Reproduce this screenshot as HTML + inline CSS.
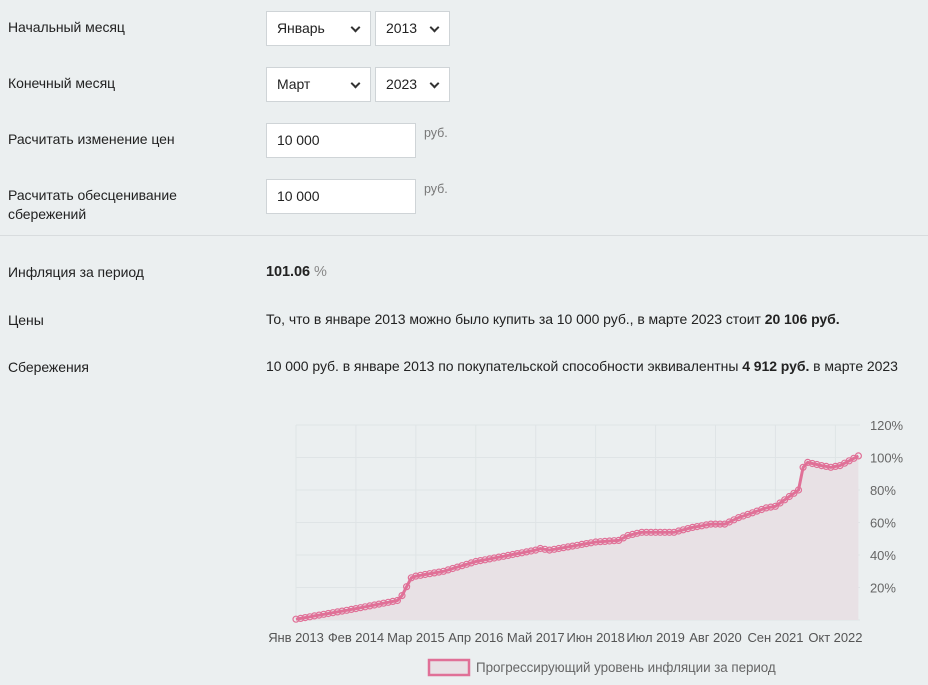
<!DOCTYPE html>
<html><head><meta charset="utf-8"><style>
body{margin:0;width:928px;height:685px;background:#ebeff0;font-family:"Liberation Sans",sans-serif;font-size:14px;color:#222;position:relative;overflow:hidden;letter-spacing:-0.05px}
.a{position:absolute}
.lbl{left:8px;line-height:19px}
.box{background:#fff;border:1px solid #cfd4d7;box-sizing:border-box;height:35px;line-height:33px;padding-left:10px;font-size:14px}
.sel::after{content:"";position:absolute;right:11px;top:12px;width:5px;height:5px;border-right:2px solid #333;border-bottom:2px solid #333;transform:rotate(45deg)}
.rub{color:#777;font-size:12.5px}
b{font-weight:bold}
</style></head><body>
<div class="a lbl" style="top:18px">Начальный месяц</div>
<div class="a box sel" style="left:266px;top:11px;width:105px">Январь</div>
<div class="a box sel" style="left:375px;top:11px;width:75px">2013</div>
<div class="a lbl" style="top:74px">Конечный месяц</div>
<div class="a box sel" style="left:266px;top:67px;width:105px">Март</div>
<div class="a box sel" style="left:375px;top:67px;width:75px">2023</div>
<div class="a lbl" style="top:130px">Расчитать изменение цен</div>
<div class="a box" style="left:266px;top:123px;width:150px">10 000</div>
<div class="a rub" style="left:424px;top:126px">руб.</div>
<div class="a lbl" style="top:186px">Расчитать обесценивание<br>сбережений</div>
<div class="a box" style="left:266px;top:179px;width:150px">10 000</div>
<div class="a rub" style="left:424px;top:182px">руб.</div>
<div class="a" style="left:0;top:235px;width:928px;height:1px;background:#d8dcde"></div>
<div class="a lbl" style="top:263px">Инфляция за период</div>
<div class="a" style="left:266px;top:264px;font-size:14.5px"><b>101.06</b> <span style="color:#888">%</span></div>
<div class="a lbl" style="top:311px">Цены</div>
<div class="a" style="left:266px;top:311px">То, что в январе 2013 можно было купить за 10 000 руб., в марте 2023 стоит <b>20 106 руб.</b></div>
<div class="a lbl" style="top:358px">Сбережения</div>
<div class="a" style="left:266px;top:358px">10 000 руб. в январе 2013 по покупательской способности эквивалентны <b>4 912 руб.</b> в марте 2023</div>
<svg class="a" style="left:0;top:0" width="928" height="685" id="ch"></svg>
<script>
var s='',x0=296,pm=4.61,yb=620,py=1.625;
for(var i=0;i<7;i++){var y=yb-i*20*py;s+='<line x1="296" x2="860" y1="'+y+'" y2="'+y+'" stroke="#dfe4e6"/>';if(i>0)s+='<text x="870" y="'+(y+5)+'" font-size="13" fill="#666" font-family="Liberation Sans">'+(i*20)+'%</text>';}
var L=['Янв 2013','Фев 2014','Мар 2015','Апр 2016','Май 2017','Июн 2018','Июл 2019','Авг 2020','Сен 2021','Окт 2022'];
for(var i=0;i<10;i++){var x=x0+i*13*pm;s+='<line x1="'+x+'" x2="'+x+'" y1="425" y2="620" stroke="#dfe4e6"/><text x="'+x+'" y="642" text-anchor="middle" font-size="13" fill="#555" font-family="Liberation Sans">'+L[i]+'</text>';}
var K=[[0,0.5],[13,7],[22,12],[23,15],[25,26],[26,27],[32,30],[39,36],[52,43],[53,44],[55,43],[65,48],[70,49],[72,52],[75,54],[80,54],[82,54],[86,57],[90,59],[93,59],[96,63],[102,69],[104,70],[107,76],[109,80],[110,94],[111,97],[114,95],[116,94],[118,95],[122,101]];
var v=[];for(var m=0;m<=122;m++){for(var k=0;k<K.length-1;k++)if(m>=K[k][0]&&m<=K[k+1][0]){var t=(m-K[k][0])/(K[k+1][0]-K[k][0]);v.push(K[k][1]+t*(K[k+1][1]-K[k][1]));break;}}
var p=v.map(function(val,m){return (x0+m*pm).toFixed(1)+','+(yb-val*py).toFixed(1)});
s+='<polygon points="'+x0+','+yb+' '+p.join(' ')+' '+(x0+122*pm)+','+yb+'" fill="#e8e1e5"/>';
s+='<polyline points="'+p.join(' ')+'" fill="none" stroke="#e07097" stroke-width="3"/>';
p.forEach(function(q){var c=q.split(',');s+='<circle cx="'+c[0]+'" cy="'+c[1]+'" r="3" fill="none" stroke="#e07097" stroke-width="1.2"/>'});
s+='<rect x="429" y="660" width="40" height="15" fill="#e8e1e5" stroke="#e07097" stroke-width="2.5"/><text x="476" y="672" font-size="13.4" fill="#666" font-family="Liberation Sans">Прогрессирующий уровень инфляции за период</text>';
document.getElementById('ch').innerHTML=s;
</script>
</body></html>
